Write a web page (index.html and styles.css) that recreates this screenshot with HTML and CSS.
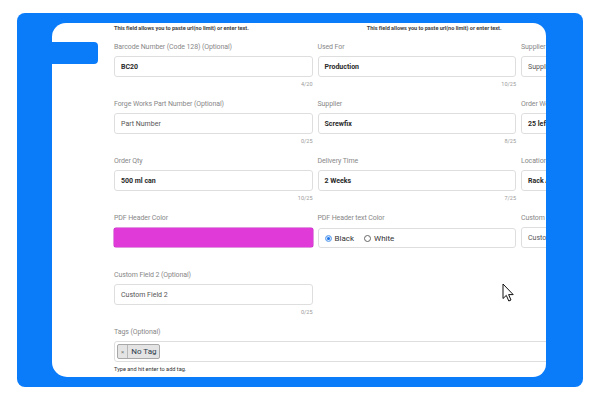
FILE: index.html
```html
<!DOCTYPE html>
<html>
<head>
<meta charset="utf-8">
<link rel="stylesheet" href="styles.css">
</head>
<body>
<div class="frame">
  <div class="card">
    <div class="tab"></div>
    <div class="hints">
      <div class="hint">This field allows you to paste url(no limit) or enter text.</div>
      <div class="hint hint-2">This field allows you to paste url(no limit) or enter text.</div>
    </div>
    <div class="grid">
      <div class="field">
        <div class="label">Barcode Number (Code 128) (Optional)</div>
        <div class="input"><span class="value">BC20</span></div>
        <div class="count">4/20</div>
      </div>
      <div class="field">
        <div class="label">Used For</div>
        <div class="input"><span class="value">Production</span></div>
        <div class="count">10/25</div>
      </div>
      <div class="field">
        <div class="label">Supplier Part Number</div>
        <div class="input"><span class="ph">Supplier Part Number</span></div>
        <div class="count">0/25</div>
      </div>

      <div class="field">
        <div class="label">Forge Works Part Number (Optional)</div>
        <div class="input"><span class="ph">Part Number</span></div>
        <div class="count">0/25</div>
      </div>
      <div class="field">
        <div class="label">Supplier</div>
        <div class="input"><span class="value">Screwfix</span></div>
        <div class="count">8/25</div>
      </div>
      <div class="field">
        <div class="label">Order Web Link</div>
        <div class="input"><span class="value">25 left in stock</span></div>
        <div class="count">16/25</div>
      </div>

      <div class="field">
        <div class="label">Order Qty</div>
        <div class="input"><span class="value">500 ml can</span></div>
        <div class="count">10/25</div>
      </div>
      <div class="field">
        <div class="label">Delivery Time</div>
        <div class="input"><span class="value">2 Weeks</span></div>
        <div class="count">7/25</div>
      </div>
      <div class="field">
        <div class="label">Location</div>
        <div class="input"><span class="value">Rack A Shelf 2</span></div>
        <div class="count">14/25</div>
      </div>

      <div class="field">
        <div class="label">PDF Header Color</div>
        <div class="swatch"></div>
      </div>
      <div class="field">
        <div class="label">PDF Header text Color</div>
        <div class="input radios">
          <span class="radio on"></span><span class="rlabel">Black</span>
          <span class="radio"></span><span class="rlabel">White</span>
        </div>
      </div>
      <div class="field">
        <div class="label">Custom Field 1 (Optional)</div>
        <div class="input"><span class="ph">Custom Field 1</span></div>
        <div class="count">0/25</div>
      </div>

      <div class="field">
        <div class="label">Custom Field 2 (Optional)</div>
        <div class="input"><span class="ph">Custom Field 2</span></div>
        <div class="count">0/25</div>
      </div>
      <div class="field"></div>
      <div class="field"></div>

      <div class="field wide">
        <div class="label">Tags (Optional)</div>
        <div class="input tags">
          <span class="chip"><span class="x">×</span><span class="chip-text">No Tag</span></span>
        </div>
        <div class="help">Type and hit enter to add tag.</div>
      </div>
    </div>
    <svg class="cursor" width="13" height="19" viewBox="0 0 13 19">
      <path d="M1 1 L1 15.5 L4.3 12.4 L6.8 18 L9 17 L6.6 11.6 L11.2 11.6 Z" fill="#fff" stroke="#111" stroke-width="1" stroke-linejoin="round"/>
    </svg>
  </div>
</div>
</body>
</html>
```

FILE: styles.css
```css
* { box-sizing: border-box; }
html, body { margin: 0; padding: 0; background: #ffffff; }
body {
  font-family: Roboto, "Liberation Sans", sans-serif;
  width: 600px;
  height: 400px;
  overflow: hidden;
}
.frame {
  margin: 13px 0 0 17px;
  width: 566px;
  height: 374px;
  background: #0a7cfa;
  border-radius: 8px;
  padding: 10px 37px 10px 35px;
}
.card {
  position: relative;
  width: 494px;
  height: 354px;
  background: #ffffff;
  border-radius: 14px 13px 13px 15px;
  overflow: hidden;
  padding-left: 62px;
}
.tab {
  position: absolute;
  left: 0;
  top: 19px;
  width: 46px;
  height: 22px;
  background: #0a7cfa;
  border-radius: 0 4px 4px 0;
}
.hints {
  display: flex;
  height: 19px;
  padding-top: 1px;
}
.hint {
  font-size: 5.6px;
  font-weight: 700;
  color: #444;
  line-height: 8px;
  letter-spacing: -0.05px;
}
.hint-2 { margin-left: 118px; }
.grid {
  display: grid;
  grid-template-columns: 198.5px 198.5px 198.5px;
  column-gap: 5px;
  grid-auto-rows: 57px;
}
.field { display: flex; flex-direction: column; min-width: 0; }
.wide { grid-column: 1 / span 3; }
.label {
  font-size: 7px;
  line-height: 10px;
  color: #888888;
  margin-bottom: 4px;
  white-space: nowrap;
  letter-spacing: -0.1px;
}
.input {
  height: 21px;
  border: 1px solid #dedede;
  border-radius: 3px;
  display: flex;
  align-items: center;
  padding-left: 6px;
  white-space: nowrap;
  overflow: hidden;
}
.value {
  font-size: 7px;
  font-weight: 700;
  color: #2a2a2a;
}
.ph {
  font-size: 7px;
  color: #555;
}
.count {
  margin-top: 3px;
  font-size: 5.5px;
  line-height: 8px;
  color: #9a9a9a;
  text-align: right;
}
.swatch {
  height: 19px;
  background: #e03ad8;
  border-radius: 2px;
  margin-top: 1px;
  box-shadow: 0 0 0 0.5px #c030c0;
}
.radios { height: 20px; margin-top: 1px; padding-left: 6px; }
.radio {
  width: 7px;
  height: 7px;
  border-radius: 50%;
  border: 0.8px solid #666;
  margin-right: 3px;
  display: inline-block;
}
.radio.on {
  border: 1px solid #7fb4f2;
  background: #1a73e8;
  box-shadow: inset 0 0 0 1px #d8e8fb;
}
.rlabel {
  font-size: 8px;
  color: #333;
  margin-right: 10px;
}
.tags { padding-left: 2px; width: 600px; }
.chip {
  display: inline-flex;
  align-items: center;
  height: 15px;
  background: #e4e4e4;
  border: 1px solid #a8a8a8;
  border-radius: 2px;
}
.x {
  font-size: 6px;
  color: #777;
  padding: 0 3px 0 3px;
  border-right: 1px solid #b8b8b8;
  line-height: 13px;
}
.chip-text {
  font-size: 8px;
  color: #2b3b4b;
  padding: 0 3px 0 3px;
}
.help {
  margin-top: 3px;
  font-size: 5.6px;
  line-height: 8px;
  color: #333;
}
.cursor {
  position: absolute;
  left: 450px;
  top: 260px;
}
```
